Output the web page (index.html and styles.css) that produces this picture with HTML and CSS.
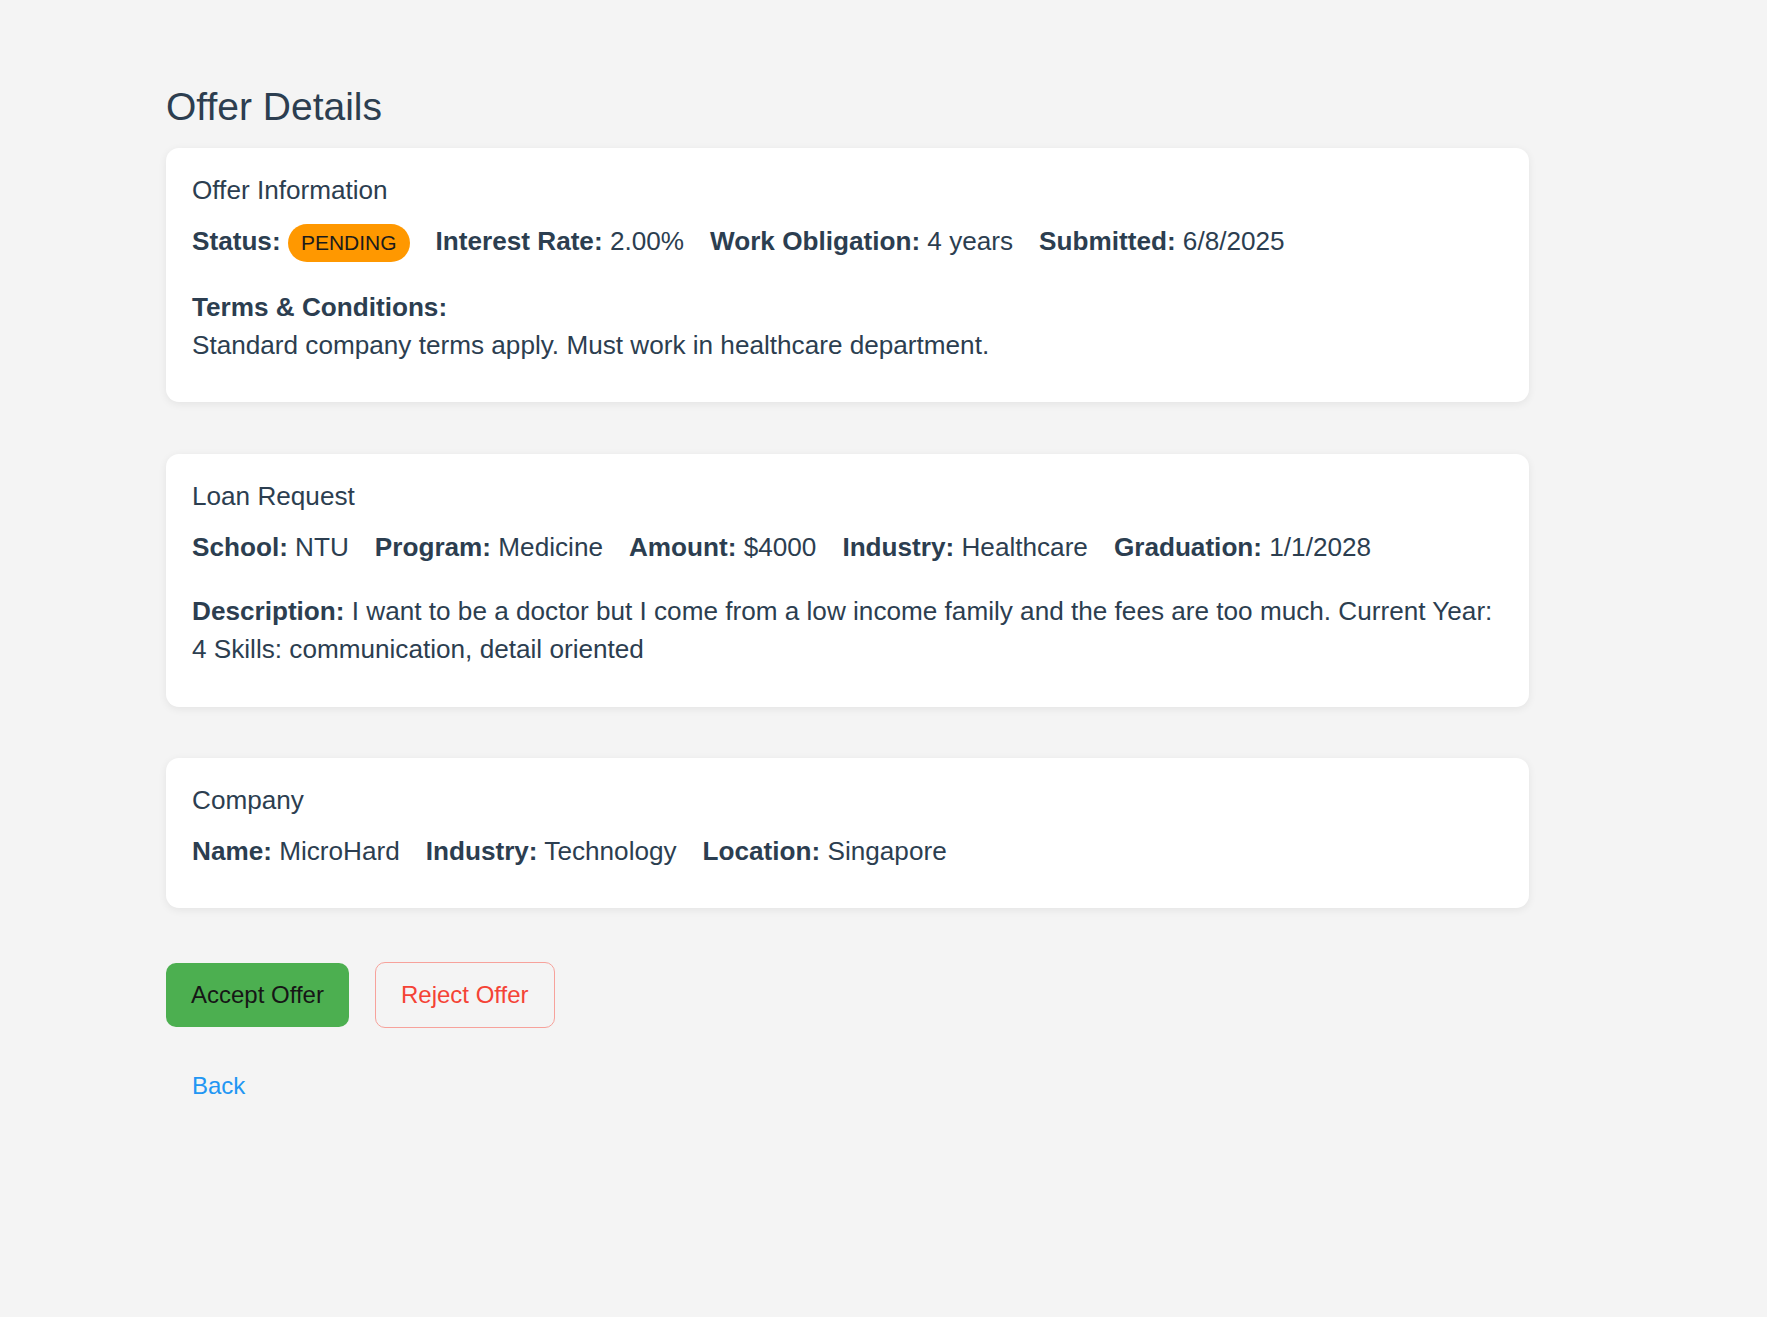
FILE: index.html
```html
<!DOCTYPE html>
<html lang="en">
<head>
<meta charset="utf-8">
<title>Offer Details</title>
<link rel="stylesheet" href="styles.css">
</head>
<body>
<div class="topbar"></div>
<main class="page">
  <h1 class="page-title">Offer Details</h1>

  <section class="card">
    <h3 class="card-title">Offer Information</h3>
    <div class="info-row">
      <span class="item"><b>Status:</b> <span class="badge">PENDING</span></span>
      <span class="item"><b>Interest Rate:</b> 2.00%</span>
      <span class="item"><b>Work Obligation:</b> 4 years</span>
      <span class="item"><b>Submitted:</b> 6/8/2025</span>
    </div>
    <div class="block">
      <div><b>Terms &amp; Conditions:</b></div>
      <div>Standard company terms apply. Must work in healthcare department.</div>
    </div>
  </section>

  <section class="card">
    <h3 class="card-title">Loan Request</h3>
    <div class="info-row">
      <span class="item"><b>School:</b> NTU</span>
      <span class="item"><b>Program:</b> Medicine</span>
      <span class="item"><b>Amount:</b> $4000</span>
      <span class="item"><b>Industry:</b> Healthcare</span>
      <span class="item"><b>Graduation:</b> 1/1/2028</span>
    </div>
    <p class="block desc"><b>Description:</b> I want to be a doctor but I come from a low income family and the fees are too much. Current Year: 4 Skills: communication, detail oriented</p>
  </section>

  <section class="card">
    <h3 class="card-title">Company</h3>
    <div class="info-row">
      <span class="item"><b>Name:</b> MicroHard</span>
      <span class="item"><b>Industry:</b> Technology</span>
      <span class="item"><b>Location:</b> Singapore</span>
    </div>
  </section>

  <div class="actions">
    <button class="btn btn-accept" type="button">Accept Offer</button>
    <button class="btn btn-reject" type="button">Reject Offer</button>
  </div>

  <div class="back-row">
    <a class="btn btn-link" href="#">Back</a>
  </div>
</main>
</body>
</html>
```

FILE: styles.css
```css
html, body {
  margin: 0;
  padding: 0;
}

body {
  background: #f4f4f4;
  font-family: "Liberation Sans", Arial, sans-serif;
  font-size: 26.15px;
  color: #2c3e50;
  min-height: 1317px;
}

.topbar {
  height: 0;
  box-shadow: 0 1px 8px rgba(0, 0, 0, 0.1);
}

.page {
  width: 1363px;
  margin-left: 166px;
  padding-top: 85px;
}

.page-title {
  margin: 0 0 19px;
  font-size: 39px;
  line-height: 44px;
  font-weight: normal;
}

.card {
  background: #ffffff;
  border-radius: 13px;
  box-shadow: 0 2px 8px rgba(0, 0, 0, 0.07);
  padding: 23px 26px 38px;
  margin-bottom: 51.6px;
  line-height: 38.4px;
}

.card-title {
  margin: 0 0 12.5px;
  font-size: 26.15px;
  font-weight: normal;
  line-height: 38.4px;
}

.info-row {
  display: flex;
  align-items: baseline;
  flex-wrap: wrap;
  column-gap: 26px;
}

.item b {
  font-weight: bold;
}

.badge {
  display: inline-block;
  vertical-align: middle;
  background: #ff9800;
  color: #1b1b1b;
  font-size: 21px;
  line-height: 24px;
  padding: 7px 13px;
  border-radius: 19px;
}

.block {
  margin: 25.5px 0 0;
}

.actions {
  display: flex;
  align-items: center;
  gap: 26px;
  margin-top: 54px;
}

.btn {
  font-family: "Liberation Sans", Arial, sans-serif;
  font-size: 24px;
  line-height: 27.6px;
  padding: 18px 25px;
  border-radius: 10px;
  border: none;
  cursor: pointer;
  text-decoration: none;
  display: inline-block;
}

.btn-accept {
  background: #4caf50;
  color: #161616;
}

.btn-reject {
  background: transparent;
  color: #f44336;
  border: 1px solid #f7a29b;
}

.back-row {
  margin-top: 26px;
  line-height: 0;
}

.btn-link {
  color: #2196f3;
  background: transparent;
  padding-left: 26px;
}
```
